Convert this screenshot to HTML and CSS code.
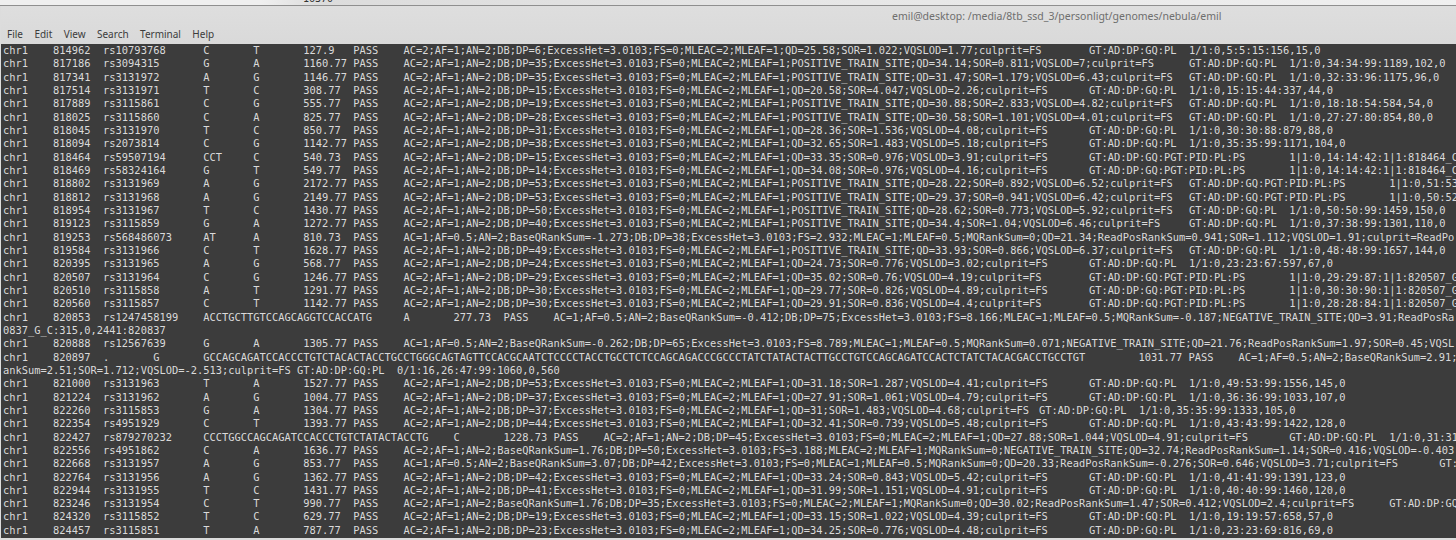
FILE: index.html
```
<!DOCTYPE html>
<html lang="en">
<head>
<meta charset="utf-8">
<title>emil@desktop</title>
<link rel="stylesheet" href="styles.css">
</head>
<body>
<div class="desk"><span class="desk-text">16370</span></div>
<main class="window">
  <header class="chrome">
    <div class="title">emil@desktop: /media/8tb_ssd_3/personligt/genomes/nebula/emil</div>
    <nav class="menu"><span>File</span><span>Edit</span><span>View</span><span>Search</span><span>Terminal</span><span>Help</span></nav>
  </header>
  <section class="term">
<div class="ln">chr1	814962	rs10793768	C	T	127.9	PASS	<span class="cell i109">AC=2;AF=1;AN=2;DB;DP=6;ExcessHet=3.0103;FS=0;MLEAC=2;MLEAF=1;QD=25.58;SOR=1.022;VQSLOD=1.77;culprit=FS</span><span class="cell">GT:AD:DP:GQ:PL	1/1:0,5:5:15:156,15,0</span></div>
<div class="ln">chr1	817186	rs3094315	G	A	1160.77	PASS	<span class="cell i125">AC=2;AF=1;AN=2;DB;DP=35;ExcessHet=3.0103;FS=0;MLEAC=2;MLEAF=1;POSITIVE_TRAIN_SITE;QD=34.14;SOR=0.811;VQSLOD=7;culprit=FS</span><span class="cell">GT:AD:DP:GQ:PL	1/1:0,34:34:99:1189,102,0</span></div>
<div class="ln">chr1	817341	rs3131972	A	G	1146.77	PASS	<span class="cell i125">AC=2;AF=1;AN=2;DB;DP=35;ExcessHet=3.0103;FS=0;MLEAC=2;MLEAF=1;POSITIVE_TRAIN_SITE;QD=31.47;SOR=1.179;VQSLOD=6.43;culprit=FS</span><span class="cell">GT:AD:DP:GQ:PL	1/1:0,32:33:96:1175,96,0</span></div>
<div class="ln">chr1	817514	rs3131971	T	C	308.77	PASS	<span class="cell i109">AC=2;AF=1;AN=2;DB;DP=15;ExcessHet=3.0103;FS=0;MLEAC=2;MLEAF=1;QD=20.58;SOR=4.047;VQSLOD=2.26;culprit=FS</span><span class="cell">GT:AD:DP:GQ:PL	1/1:0,15:15:44:337,44,0</span></div>
<div class="ln">chr1	817889	rs3115861	C	G	555.77	PASS	<span class="cell i125">AC=2;AF=1;AN=2;DB;DP=19;ExcessHet=3.0103;FS=0;MLEAC=2;MLEAF=1;POSITIVE_TRAIN_SITE;QD=30.88;SOR=2.833;VQSLOD=4.82;culprit=FS</span><span class="cell">GT:AD:DP:GQ:PL	1/1:0,18:18:54:584,54,0</span></div>
<div class="ln">chr1	818025	rs3115860	C	A	825.77	PASS	<span class="cell i125">AC=2;AF=1;AN=2;DB;DP=28;ExcessHet=3.0103;FS=0;MLEAC=2;MLEAF=1;POSITIVE_TRAIN_SITE;QD=30.58;SOR=1.101;VQSLOD=4.01;culprit=FS</span><span class="cell">GT:AD:DP:GQ:PL	1/1:0,27:27:80:854,80,0</span></div>
<div class="ln">chr1	818045	rs3131970	T	C	850.77	PASS	<span class="cell i109">AC=2;AF=1;AN=2;DB;DP=31;ExcessHet=3.0103;FS=0;MLEAC=2;MLEAF=1;QD=28.36;SOR=1.536;VQSLOD=4.08;culprit=FS</span><span class="cell">GT:AD:DP:GQ:PL	1/1:0,30:30:88:879,88,0</span></div>
<div class="ln">chr1	818094	rs2073814	C	G	1142.77	PASS	<span class="cell i109">AC=2;AF=1;AN=2;DB;DP=38;ExcessHet=3.0103;FS=0;MLEAC=2;MLEAF=1;QD=32.65;SOR=1.483;VQSLOD=5.18;culprit=FS</span><span class="cell">GT:AD:DP:GQ:PL	1/1:0,35:35:99:1171,104,0</span></div>
<div class="ln">chr1	818464	rs59507194	CCT	C	540.73	PASS	<span class="cell i109">AC=2;AF=1;AN=2;DB;DP=15;ExcessHet=3.0103;FS=0;MLEAC=2;MLEAF=1;QD=33.35;SOR=0.976;VQSLOD=3.91;culprit=FS</span><span class="cell">GT:AD:DP:GQ:PGT:PID:PL:PS	1|1:0,14:14:42:1|1:818464_C</span></div>
<div class="ln">chr1	818469	rs58324164	G	T	549.77	PASS	<span class="cell i109">AC=2;AF=1;AN=2;DB;DP=14;ExcessHet=3.0103;FS=0;MLEAC=2;MLEAF=1;QD=34.08;SOR=0.976;VQSLOD=4.16;culprit=FS</span><span class="cell">GT:AD:DP:GQ:PGT:PID:PL:PS	1|1:0,14:14:42:1|1:818464_C</span></div>
<div class="ln">chr1	818802	rs3131969	A	G	2172.77	PASS	<span class="cell i125">AC=2;AF=1;AN=2;DB;DP=53;ExcessHet=3.0103;FS=0;MLEAC=2;MLEAF=1;POSITIVE_TRAIN_SITE;QD=28.22;SOR=0.892;VQSLOD=6.52;culprit=FS</span><span class="cell">GT:AD:DP:GQ:PGT:PID:PL:PS	1|1:0,51:53</span></div>
<div class="ln">chr1	818812	rs3131968	A	G	2149.77	PASS	<span class="cell i125">AC=2;AF=1;AN=2;DB;DP=53;ExcessHet=3.0103;FS=0;MLEAC=2;MLEAF=1;POSITIVE_TRAIN_SITE;QD=29.37;SOR=0.941;VQSLOD=6.42;culprit=FS</span><span class="cell">GT:AD:DP:GQ:PGT:PID:PL:PS	1|1:0,50:52</span></div>
<div class="ln">chr1	818954	rs3131967	T	C	1430.77	PASS	<span class="cell i125">AC=2;AF=1;AN=2;DB;DP=50;ExcessHet=3.0103;FS=0;MLEAC=2;MLEAF=1;POSITIVE_TRAIN_SITE;QD=28.62;SOR=0.773;VQSLOD=5.92;culprit=FS</span><span class="cell">GT:AD:DP:GQ:PL	1/1:0,50:50:99:1459,150,0</span></div>
<div class="ln">chr1	819123	rs3115859	G	A	1272.77	PASS	<span class="cell i125">AC=2;AF=1;AN=2;DB;DP=40;ExcessHet=3.0103;FS=0;MLEAC=2;MLEAF=1;POSITIVE_TRAIN_SITE;QD=34.4;SOR=1.04;VQSLOD=6.46;culprit=FS</span><span class="cell">GT:AD:DP:GQ:PL	1/1:0,37:38:99:1301,110,0</span></div>
<div class="ln">chr1	819253	rs568486073	AT	A	810.73	PASS	AC=1;AF=0.5;AN=2;BaseQRankSum=-1.273;DB;DP=38;ExcessHet=3.0103;FS=2.932;MLEAC=1;MLEAF=0.5;MQRankSum=0;QD=21.34;ReadPosRankSum=0.941;SOR=1.112;VQSLOD=1.91;culprit=ReadPo</div>
<div class="ln">chr1	819584	rs3131966	C	T	1628.77	PASS	<span class="cell i125">AC=2;AF=1;AN=2;DB;DP=49;ExcessHet=3.0103;FS=0;MLEAC=2;MLEAF=1;POSITIVE_TRAIN_SITE;QD=33.93;SOR=0.866;VQSLOD=6.37;culprit=FS</span><span class="cell">GT:AD:DP:GQ:PL	1/1:0,48:48:99:1657,144,0</span></div>
<div class="ln">chr1	820395	rs3131965	A	G	568.77	PASS	<span class="cell i109">AC=2;AF=1;AN=2;DB;DP=24;ExcessHet=3.0103;FS=0;MLEAC=2;MLEAF=1;QD=24.73;SOR=0.776;VQSLOD=3.02;culprit=FS</span><span class="cell">GT:AD:DP:GQ:PL	1/1:0,23:23:67:597,67,0</span></div>
<div class="ln">chr1	820507	rs3131964	C	G	1246.77	PASS	<span class="cell i109">AC=2;AF=1;AN=2;DB;DP=29;ExcessHet=3.0103;FS=0;MLEAC=2;MLEAF=1;QD=35.02;SOR=0.76;VQSLOD=4.19;culprit=FS</span><span class="cell">GT:AD:DP:GQ:PGT:PID:PL:PS	1|1:0,29:29:87:1|1:820507_G</span></div>
<div class="ln">chr1	820510	rs3115858	A	T	1291.77	PASS	<span class="cell i109">AC=2;AF=1;AN=2;DB;DP=30;ExcessHet=3.0103;FS=0;MLEAC=2;MLEAF=1;QD=29.77;SOR=0.826;VQSLOD=4.89;culprit=FS</span><span class="cell">GT:AD:DP:GQ:PGT:PID:PL:PS	1|1:0,30:30:90:1|1:820507_G</span></div>
<div class="ln">chr1	820560	rs3115857	C	T	1142.77	PASS	<span class="cell i109">AC=2;AF=1;AN=2;DB;DP=30;ExcessHet=3.0103;FS=0;MLEAC=2;MLEAF=1;QD=29.91;SOR=0.836;VQSLOD=4.4;culprit=FS</span><span class="cell">GT:AD:DP:GQ:PGT:PID:PL:PS	1|1:0,28:28:84:1|1:820507_G</span></div>
<div class="ln">chr1	820853	rs1247458199	ACCTGCTTGTCCAGCAGGTCCACCATG	A	277.73	PASS	AC=1;AF=0.5;AN=2;BaseQRankSum=-0.412;DB;DP=75;ExcessHet=3.0103;FS=8.166;MLEAC=1;MLEAF=0.5;MQRankSum=-0.187;NEGATIVE_TRAIN_SITE;QD=3.91;ReadPosRa</div>
<div class="ln">0837_G_C:315,0,2441:820837</div>
<div class="ln">chr1	820888	rs12567639	G	A	1305.77	PASS	AC=1;AF=0.5;AN=2;BaseQRankSum=-0.262;DB;DP=65;ExcessHet=3.0103;FS=8.789;MLEAC=1;MLEAF=0.5;MQRankSum=0.071;NEGATIVE_TRAIN_SITE;QD=21.76;ReadPosRankSum=1.97;SOR=0.45;VQSL</div>
<div class="ln">chr1	820897	.	G	<span class="cell a149">GCCAGCAGATCCACCCTGTCTACACTACCTGCCTGGGCAGTAGTTCCACGCAATCTCCCCTACCTGCCTCTCCAGCAGACCCGCCCTATCTATACTACTTGCCTGTCCAGCAGATCCACTCTATCTACACGACCTGCCTGT</span><span class="cell">1031.77	PASS	AC=1;AF=0.5;AN=2;BaseQRankSum=2.91;</span></div>
<div class="ln"><span class="cell w47">ankSum=2.51;SOR=1.712;VQSLOD=-2.513;culprit=FS</span><span class="cell">GT:AD:DP:GQ:PL	0/1:16,26:47:99:1060,0,560</span></div>
<div class="ln">chr1	821000	rs3131963	T	A	1527.77	PASS	<span class="cell i109">AC=2;AF=1;AN=2;DB;DP=53;ExcessHet=3.0103;FS=0;MLEAC=2;MLEAF=1;QD=31.18;SOR=1.287;VQSLOD=4.41;culprit=FS</span><span class="cell">GT:AD:DP:GQ:PL	1/1:0,49:53:99:1556,145,0</span></div>
<div class="ln">chr1	821224	rs3131962	A	G	1004.77	PASS	<span class="cell i109">AC=2;AF=1;AN=2;DB;DP=37;ExcessHet=3.0103;FS=0;MLEAC=2;MLEAF=1;QD=27.91;SOR=1.061;VQSLOD=4.79;culprit=FS</span><span class="cell">GT:AD:DP:GQ:PL	1/1:0,36:36:99:1033,107,0</span></div>
<div class="ln">chr1	822260	rs3115853	G	A	1304.77	PASS	<span class="cell i101">AC=2;AF=1;AN=2;DB;DP=37;ExcessHet=3.0103;FS=0;MLEAC=2;MLEAF=1;QD=31;SOR=1.483;VQSLOD=4.68;culprit=FS</span><span class="cell">GT:AD:DP:GQ:PL	1/1:0,35:35:99:1333,105,0</span></div>
<div class="ln">chr1	822354	rs4951929	C	T	1393.77	PASS	<span class="cell i109">AC=2;AF=1;AN=2;DB;DP=44;ExcessHet=3.0103;FS=0;MLEAC=2;MLEAF=1;QD=32.41;SOR=0.739;VQSLOD=5.48;culprit=FS</span><span class="cell">GT:AD:DP:GQ:PL	1/1:0,43:43:99:1422,128,0</span></div>
<div class="ln">chr1	822427	rs879270232	CCCTGGCCAGCAGATCCACCCTGTCTATACTACCTG	C	1228.73	PASS	<span class="cell i109">AC=2;AF=1;AN=2;DB;DP=45;ExcessHet=3.0103;FS=0;MLEAC=2;MLEAF=1;QD=27.88;SOR=1.044;VQSLOD=4.91;culprit=FS</span><span class="cell">GT:AD:DP:GQ:PL	1/1:0,31:31</span></div>
<div class="ln">chr1	822556	rs4951862	C	A	1636.77	PASS	AC=2;AF=1;AN=2;BaseQRankSum=1.76;DB;DP=50;ExcessHet=3.0103;FS=3.188;MLEAC=2;MLEAF=1;MQRankSum=0;NEGATIVE_TRAIN_SITE;QD=32.74;ReadPosRankSum=1.14;SOR=0.416;VQSLOD=-0.403</div>
<div class="ln">chr1	822668	rs3131957	A	G	853.77	PASS	<span class="cell i165">AC=1;AF=0.5;AN=2;BaseQRankSum=3.07;DB;DP=42;ExcessHet=3.0103;FS=0;MLEAC=1;MLEAF=0.5;MQRankSum=0;QD=20.33;ReadPosRankSum=-0.276;SOR=0.646;VQSLOD=3.71;culprit=FS</span><span class="cell">GT:</span></div>
<div class="ln">chr1	822764	rs3131956	A	G	1362.77	PASS	<span class="cell i109">AC=2;AF=1;AN=2;DB;DP=42;ExcessHet=3.0103;FS=0;MLEAC=2;MLEAF=1;QD=33.24;SOR=0.843;VQSLOD=5.42;culprit=FS</span><span class="cell">GT:AD:DP:GQ:PL	1/1:0,41:41:99:1391,123,0</span></div>
<div class="ln">chr1	822944	rs3131955	T	C	1431.77	PASS	<span class="cell i109">AC=2;AF=1;AN=2;DB;DP=41;ExcessHet=3.0103;FS=0;MLEAC=2;MLEAF=1;QD=31.99;SOR=1.151;VQSLOD=4.91;culprit=FS</span><span class="cell">GT:AD:DP:GQ:PL	1/1:0,40:40:99:1460,120,0</span></div>
<div class="ln">chr1	823246	rs3131954	C	T	990.77	PASS	<span class="cell i157">AC=2;AF=1;AN=2;BaseQRankSum=1.76;DB;DP=35;ExcessHet=3.0103;FS=0;MLEAC=2;MLEAF=1;MQRankSum=0;QD=30.02;ReadPosRankSum=1.47;SOR=0.412;VQSLOD=2.4;culprit=FS</span><span class="cell">GT:AD:DP:GQ</span></div>
<div class="ln">chr1	824320	rs3115852	T	C	629.77	PASS	<span class="cell i109">AC=2;AF=1;AN=2;DB;DP=19;ExcessHet=3.0103;FS=0;MLEAC=2;MLEAF=1;QD=33.15;SOR=1.022;VQSLOD=4.39;culprit=FS</span><span class="cell">GT:AD:DP:GQ:PL	1/1:0,19:19:57:658,57,0</span></div>
<div class="ln">chr1	824457	rs3115851	T	A	787.77	PASS	<span class="cell i109">AC=2;AF=1;AN=2;DB;DP=23;ExcessHet=3.0103;FS=0;MLEAC=2;MLEAF=1;QD=34.25;SOR=0.776;VQSLOD=4.48;culprit=FS</span><span class="cell">GT:AD:DP:GQ:PL	1/1:0,23:23:69:816,69,0</span></div>
  </section>
</main>
</body>
</html>
```

FILE: styles.css
```
html, body {
  margin: 0;
  padding: 0;
  width: 1456px;
  height: 540px;
  overflow: hidden;
  background: #ececec;
}

.desk {
  height: 5px;
  overflow: hidden;
  background: linear-gradient(90deg, #efefef 0, #efefef 18%, #dcdcdc 22%, #e6e6e6 55%, #f0f0f0 100%);
  border-bottom: 1px solid #8f8f8f;
  padding-left: 303px;
}

.desk-text {
  display: block;
  margin-top: -7px;
  font: 10px/12px "DejaVu Sans Mono", monospace;
  color: #333;
}

.window {
  height: 534px;
  padding-left: 1px;
  background: #dcdcdc;
  display: flex;
  flex-direction: column;
}

.chrome {
  height: 38px;
  flex: none;
  box-sizing: border-box;
  background: linear-gradient(#dedede, #d9d9d9);
  display: flex;
  flex-direction: column;
  justify-content: space-between;
  padding: 3px 0 3px;
  font-family: "Noto Sans", "Open Sans", sans-serif;
}

.title {
  align-self: flex-start;
  margin-left: 891px;
  font-size: 10.5px;
  line-height: 14px;
  color: #6e6e6e;
  white-space: nowrap;
}

.menu {
  display: flex;
  gap: 11.4px;
  padding-left: 6px;
  font-size: 10px;
  line-height: 14px;
  color: #3c3c3c;
}

.term {
  height: 494px;
  flex: none;
  overflow: hidden;
  background: #3c3c3c;
  color: #dadada;
  font-family: "DejaVu Sans Mono", monospace;
  font-size: 10.4px;
  tab-size: 8;
  padding-left: 2px;
}

.ln {
  height: 13.33px;
  line-height: 13.33px;
  white-space: pre;
  overflow: hidden;
}

.cell {
  display: inline-block;
}

.w47 { width: 47ch; }
.i101 { width: 101.6ch; }
.i109 { width: 109.6ch; }
.i125 { width: 125.6ch; }
.a149 { width: 149.5ch; }
.i157 { width: 157.6ch; }
.i165 { width: 165.6ch; }
```
